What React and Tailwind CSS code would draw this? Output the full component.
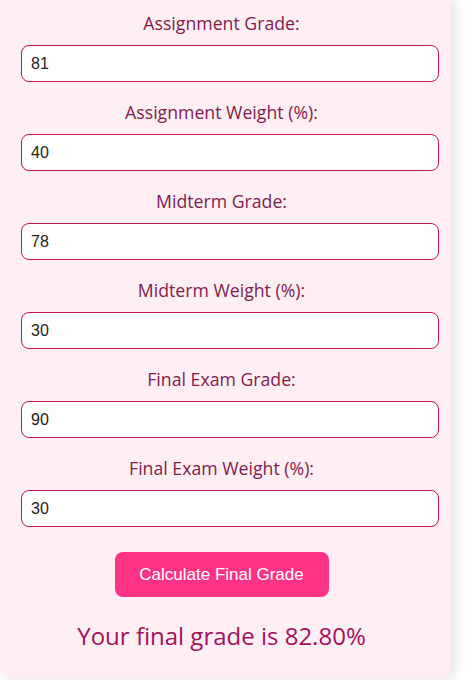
import React, { useState } from 'react';

const fields = [
  { key: 'assignment', label: 'Assignment Grade:', value: '81' },
  { key: 'assignmentWeight', label: 'Assignment Weight (%):', value: '40' },
  { key: 'midterm', label: 'Midterm Grade:', value: '78' },
  { key: 'midtermWeight', label: 'Midterm Weight (%):', value: '30' },
  { key: 'final', label: 'Final Exam Grade:', value: '90' },
  { key: 'finalWeight', label: 'Final Exam Weight (%):', value: '30' },
];

const App = () => {
  const [values, setValues] = useState(
    Object.fromEntries(fields.map((f) => [f.key, f.value]))
  );
  const [result, setResult] = useState('82.80');

  const calculate = () => {
    const n = (k) => parseFloat(values[k]) || 0;
    const total =
      (n('assignment') * n('assignmentWeight') +
        n('midterm') * n('midtermWeight') +
        n('final') * n('finalWeight')) /
      100;
    setResult(total.toFixed(2));
  };

  return (
    <div className="min-h-[680px] bg-white">
      <div className="w-[451px] bg-[#ffeef4] rounded-b-xl shadow-[4px_0_14px_rgba(0,0,0,0.12)] pl-[21px] pt-[12px] pb-[27px]">
        <div className="w-[401px]">
          {fields.map((f, i) => (
            <div key={f.key} className={i === 0 ? '' : 'mt-[19px]'}>
              <label className="block text-center text-[17.7px] leading-[22px] text-[#7d1d4d] font-['Open_Sans',sans-serif]">
                {f.label}
              </label>
              <input
                type="text"
                value={values[f.key]}
                onChange={(e) => setValues({ ...values, [f.key]: e.target.value })}
                className="mt-[11px] block w-[418px] h-[37px] px-[9px] bg-white border border-[#c2185b] rounded-lg text-[16px] text-[#222] outline-none font-['Liberation_Sans',Arial,sans-serif]"
              />
            </div>
          ))}

          <div className="flex justify-center mt-[25px]">
            <button
              onClick={calculate}
              className="w-[214px] h-[45px] bg-[#ff3385] text-white text-[17px] rounded-lg font-['Liberation_Sans',Arial,sans-serif]"
            >
              Calculate Final Grade
            </button>
          </div>

          <p className="mt-[23px] text-center text-[24px] leading-[32px] text-[#a3125a] font-['Open_Sans',sans-serif]">
            Your final grade is {result}%
          </p>
        </div>
      </div>
    </div>
  );
};

export default App;
